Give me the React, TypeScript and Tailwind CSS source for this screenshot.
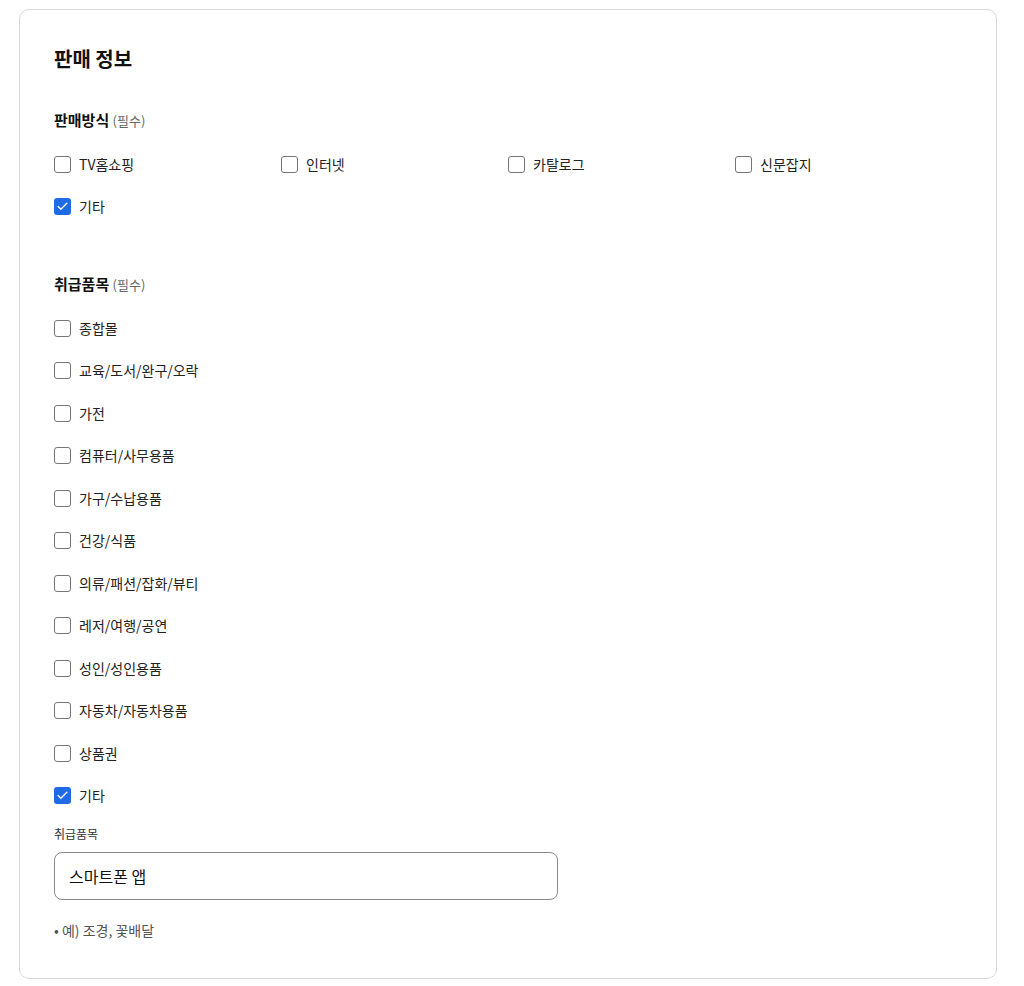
import { Check } from 'lucide-react'

const 판매방식 = [
  { label: 'TV홈쇼핑', checked: false },
  { label: '인터넷', checked: false },
  { label: '카탈로그', checked: false },
  { label: '신문잡지', checked: false },
  { label: '기타', checked: true },
]

const 취급품목 = [
  { label: '종합몰', checked: false },
  { label: '교육/도서/완구/오락', checked: false },
  { label: '가전', checked: false },
  { label: '컴퓨터/사무용품', checked: false },
  { label: '가구/수납용품', checked: false },
  { label: '건강/식품', checked: false },
  { label: '의류/패션/잡화/뷰티', checked: false },
  { label: '레저/여행/공연', checked: false },
  { label: '성인/성인용품', checked: false },
  { label: '자동차/자동차용품', checked: false },
  { label: '상품권', checked: false },
  { label: '기타', checked: true },
]

function CheckItem({ label, checked }: { label: string; checked: boolean }) {
  return (
    <label className="flex items-center gap-[8px] h-[42.5px] cursor-pointer">
      {checked ? (
        <span className="w-[17px] h-[17px] rounded-[3px] bg-[#1f6be6] flex items-center justify-center">
          <Check className="w-[13px] h-[13px] text-white" strokeWidth={2.5} />
        </span>
      ) : (
        <span className="w-[17px] h-[17px] rounded-[3px] border border-[#767676] bg-white" />
      )}
      <span className="text-[14px] text-[#222]">{label}</span>
    </label>
  )
}

export default function App() {
  return (
    <div
      className="min-h-[986px] bg-white pt-[9px] pl-[19px]"
      style={{ fontFamily: '"Noto Sans CJK KR", "Noto Sans", sans-serif' }}
    >
      <div className="w-[978px] border border-[#d9d9d9] rounded-[10px] px-[34px] pt-[34px] pb-[38px]">
        <h2 className="text-[20px] leading-[30px] font-bold text-[#111]">판매 정보</h2>

        <div className="mt-[35px] text-[15px] leading-[22px] font-bold text-[#111]">
          판매방식 <span className="text-[13px] font-normal text-[#666]">(필수)</span>
        </div>
        <div className="mt-[11px] grid grid-cols-4">
          {판매방식.map((it) => (
            <CheckItem key={it.label} {...it} />
          ))}
        </div>

        <div className="mt-[45px] text-[15px] leading-[22px] font-bold text-[#111]">
          취급품목 <span className="text-[13px] font-normal text-[#666]">(필수)</span>
        </div>
        <div className="mt-[11px] flex flex-col">
          {취급품목.map((it) => (
            <CheckItem key={it.label} {...it} />
          ))}
        </div>

        <div className="mt-[8px] text-[12px] leading-[18px] text-[#333]">취급품목</div>
        <input
          readOnly
          value="스마트폰 앱"
          className="mt-[9px] w-[504px] h-[48px] border border-[#8a8a8a] rounded-[8px] px-[14px] text-[16px] text-[#111] outline-none"
        />
        <div className="mt-[20px] text-[14px] leading-[20px] text-[#555]">• 예) 조경, 꽃배달</div>
      </div>
    </div>
  )
}
